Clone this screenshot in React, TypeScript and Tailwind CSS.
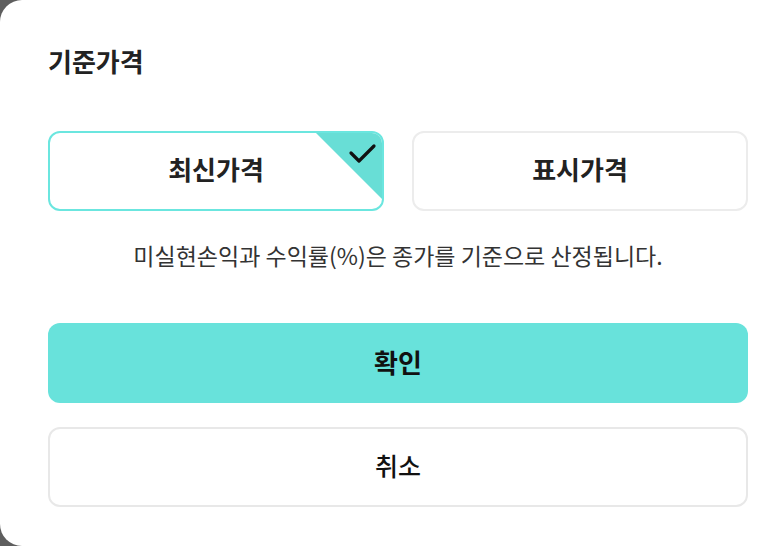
import React, { useState } from "react";

const font = { fontFamily: '"Noto Sans CJK KR", "Noto Sans", sans-serif' };

const options = ["최신가격", "표시가격"];

export default function App() {
  const [selected, setSelected] = useState(0);

  return (
    <div className="w-[770px] h-[546px] overflow-hidden bg-[#5e5e5e]" style={font}>
      <div className="w-[796px] h-[546px] bg-white rounded-[22px] px-12 pt-[43px]">
        <h2 className="text-[26px] leading-9 font-bold text-[#222]">기준가격</h2>

        <div className="mt-[52px] grid grid-cols-2 gap-7">
          {options.map((label, i) => {
            const active = i === selected;
            return (
              <button
                key={label}
                onClick={() => setSelected(i)}
                className={
                  "relative h-20 pb-[5px] rounded-xl border-2 overflow-hidden bg-white text-[26px] font-bold text-[#222] " +
                  (active ? "border-[#6be6df]" : "border-[#ececec]")
                }
              >
                {label}
                {active && (
                  <svg className="absolute top-0 right-0" width="66" height="66" viewBox="0 0 66 66">
                    <polygon points="0,0 66,0 66,66" fill="#68ded6" />
                    <polyline
                      points="35,20 43,28 58,13"
                      fill="none"
                      stroke="#111"
                      strokeWidth="3.2"
                      strokeLinecap="round"
                      strokeLinejoin="round"
                    />
                  </svg>
                )}
              </button>
            );
          })}
        </div>

        <p className="mt-[28px] text-center text-[23px] leading-8 text-[#333]">
          미실현손익과 수익률(%)은 종가를 기준으로 산정됩니다.
        </p>

        <button className="mt-[52px] w-full h-20 pb-[3px] rounded-xl bg-[#68e2db] text-[26px] font-bold text-[#111]">
          확인
        </button>
        <button className="mt-6 w-full h-20 pb-[3px] rounded-xl border-2 border-[#e8e8e8] bg-white text-[25px] font-medium text-[#111]">
          취소
        </button>
      </div>
    </div>
  );
}
